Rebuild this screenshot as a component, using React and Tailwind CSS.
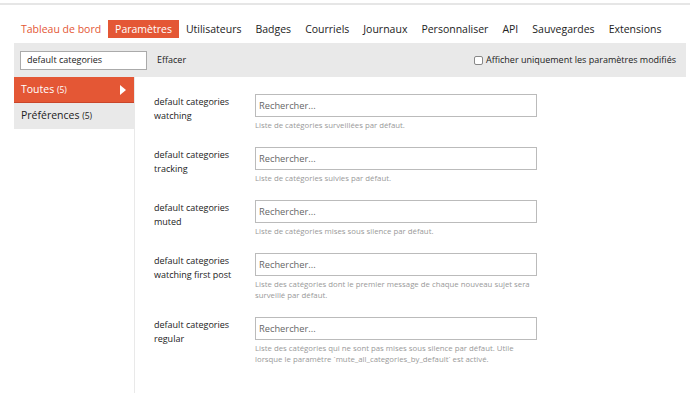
import React from 'react';

const tabs = ['Tableau de bord', 'Paramètres', 'Utilisateurs', 'Badges', 'Courriels', 'Journaux', 'Personnaliser', 'API', 'Sauvegardes', 'Extensions'];

const settings = [
    { label: ['default categories', 'watching'], desc: ['Liste de catégories surveillées par défaut.'] },
    { label: ['default categories', 'tracking'], desc: ['Liste de catégories suivies par défaut.'] },
    { label: ['default categories', 'muted'], desc: ['Liste de catégories mises sous silence par défaut.'] },
    { label: ['default categories', 'watching first post'], desc: ['Liste des catégories dont le premier message de chaque nouveau sujet sera', 'surveillé par défaut.'] },
    { label: ['default categories', 'regular'], desc: ['Liste des catégories qui ne sont pas mises sous silence par défaut. Utile', 'lorsque le paramètre `mute_all_categories_by_default` est activé.'] },
];

const App = () => {
    return (
        <div className="w-[690px] h-[393px] bg-white overflow-hidden text-[#222]" style={{ fontFamily: '"Open Sans", sans-serif' }}>
            <div className="pt-[3px]">
                <div className="h-[2px] bg-[#e6e6e6]" />
            </div>

            <div className="pl-[14px] pr-[4px]">
                <ul className="flex mt-[15px] text-[10.5px] leading-[18px] whitespace-nowrap">
                    {tabs.map((tab, i) => (
                        <li
                            key={tab}
                            className={
                                i === 1
                                    ? 'px-[7px] bg-[#e45735] text-white'
                                    : i === 0
                                        ? 'px-[7px] text-[#e45735]'
                                        : 'px-[7px] text-[#222]'
                            }
                        >
                            {tab}
                        </li>
                    ))}
                </ul>

                <div className="mt-[5px] h-[34px] bg-[#e9e9e9] flex items-center px-[6px] whitespace-nowrap">
                    <div className="w-[127px] h-[19px] bg-white border border-[#aaa] flex items-center px-[6px] text-[9px]">
                        default categories
                    </div>
                    <span className="ml-[10px] text-[9px]">Effacer</span>
                    <label className="ml-auto mr-[4px] flex items-center gap-[3px] text-[9px]">
                        <span className="w-[9px] h-[9px] border border-[#888] rounded-[2px] bg-white" />
                        Afficher uniquement les paramètres modifiés
                    </label>
                </div>

                <div className="flex h-[320px]">
                    <div className="w-[121px] border-r border-[#e9e9e9] shrink-0">
                        <div className="h-[26px] bg-[#e45735] text-white flex items-center justify-between pl-[7px] pr-[8px] text-[10.5px] border-b border-[#c9452a]">
                            <span>Toutes <span className="text-[8.5px]">(5)</span></span>
                            <svg width="6" height="10" viewBox="0 0 6 10"><path d="M0 0 L6 5 L0 10 Z" fill="white" /></svg>
                        </div>
                        <div className="h-[26px] bg-[#e9e9e9] flex items-center pl-[7px] text-[10.5px]">
                            <span>Préférences <span className="text-[8.5px]">(5)</span></span>
                        </div>
                    </div>

                    <div className="flex-1 pl-[19px] pt-[17px]">
                        {settings.map((s, i) => (
                            <div key={i} className="flex mb-[16px]">
                                <div className="w-[101px] pt-[1px] text-[9px] leading-[14px]">
                                    {s.label.map(l => <div key={l}>{l}</div>)}
                                </div>
                                <div>
                                    <div className="w-[282px] h-[23px] border border-[#bbb] flex items-center px-[3px] text-[9.3px] text-[#666]">
                                        Rechercher...
                                    </div>
                                    <div className="mt-[3px] text-[7.8px] leading-[11px] text-[#999]">
                                        {s.desc.map(d => <div key={d}>{d}</div>)}
                                    </div>
                                </div>
                            </div>
                        ))}
                    </div>
                </div>
            </div>
        </div>
    );
};

export default App;
